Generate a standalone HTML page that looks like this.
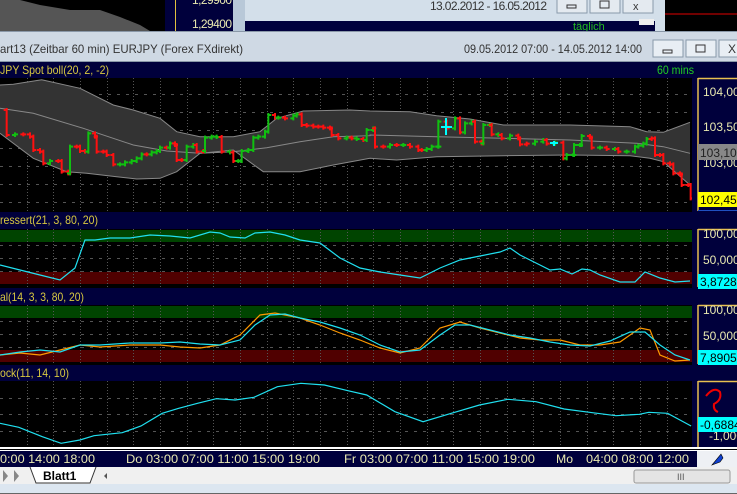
<!DOCTYPE html>
<html><head><meta charset="utf-8"><style>
html,body{margin:0;padding:0;width:737px;height:494px;overflow:hidden;background:#000;font-family:"Liberation Sans",sans-serif}
svg{display:block}
</style></head><body>
<svg id="s" width="737" height="494" xmlns="http://www.w3.org/2000/svg" font-family="Liberation Sans, sans-serif">
<rect x="0" y="0" width="737" height="31" fill="#000"/>
<path d="M0 0 L20 0 L40 5 L70 10 L100 10 L120 17 L140 25 L150 31 L0 31Z" fill="#555"/>
<rect x="165" y="0" width="10" height="31" fill="#00003c"/>
<line x1="175.5" y1="0" x2="175.5" y2="31" stroke="#e0c040"/>
<rect x="176" y="0" width="57" height="31" fill="#00003c"/>
<text x="192" y="28" font-size="12" fill="#e8e8b0" textLength="40">1,29400</text>
<text x="192" y="4" font-size="12" fill="#e8e8b0" textLength="40">1,29900</text>
<rect x="233" y="0" width="12" height="31" fill="#b8c8d8"/>
<rect x="245" y="0" width="420" height="31" fill="#d3dfea"/>
<text x="430" y="10" font-size="12" fill="#333" textLength="117">13.02.2012 - 16.05.2012</text>
<rect x="557" y="-4" width="30" height="17" fill="#e4eaf0" stroke="#8899aa"/>
<rect x="590" y="-4" width="30" height="17" fill="#e4eaf0" stroke="#8899aa"/>
<rect x="623" y="-4" width="30" height="17" fill="#e4eaf0" stroke="#8899aa"/>
<rect x="567" y="5" width="9" height="3" fill="none" stroke="#333"/>
<rect x="600" y="1" width="9" height="7" fill="none" stroke="#333"/>
<text x="633" y="10" font-size="11" fill="#333">x</text>
<rect x="245" y="21" width="410" height="10" fill="#00003c"/>
<text x="573" y="30" font-size="11" fill="#22bb22">täglich</text>
<rect x="639" y="19" width="15" height="6" fill="#eee"/>
<rect x="665" y="0" width="72" height="31" fill="#000"/>
<line x1="665" y1="14" x2="737" y2="14" stroke="#e00000"/>
<rect x="0" y="31" width="737" height="31" fill="#cfd9e4"/>
<line x1="0" y1="31.5" x2="737" y2="31.5" stroke="#8a98a8"/>
<line x1="0" y1="61.5" x2="737" y2="61.5" stroke="#8a98a8"/>
<text x="0" y="53" font-size="12" fill="#333" textLength="243" lengthAdjust="spacingAndGlyphs">art13 (Zeitbar 60 min)  EURJPY (Forex FXdirekt)</text>
<text x="464" y="53" font-size="12" fill="#333" textLength="178" lengthAdjust="spacingAndGlyphs">09.05.2012 07:00 - 14.05.2012 14:00</text>
<rect x="653" y="40" width="30" height="17" fill="#e8eef4" stroke="#8899aa"/>
<rect x="686" y="40" width="30" height="17" fill="#e8eef4" stroke="#8899aa"/>
<rect x="719" y="40" width="30" height="17" fill="#e8eef4" stroke="#8899aa"/>
<rect x="663" y="50" width="9" height="3" fill="none" stroke="#333"/>
<rect x="696" y="45" width="9" height="7" fill="none" stroke="#333"/>
<text x="728" y="53" font-size="12" fill="#333">X</text>
<rect x="0" y="62" width="737" height="16" fill="#00003c"/>
<text x="0" y="74" font-size="12" fill="#d8c840" textLength="109" lengthAdjust="spacingAndGlyphs">JPY Spot boll(20, 2, -2)</text>
<text x="657" y="74" font-size="12" fill="#22cc22" textLength="37" lengthAdjust="spacingAndGlyphs">60 mins</text>
<rect x="0" y="212" width="737" height="17" fill="#00003c"/>
<text x="0" y="224" font-size="12" fill="#d8c840" textLength="98" lengthAdjust="spacingAndGlyphs">ressert(21, 3, 80, 20)</text>
<rect x="0" y="288" width="737" height="17" fill="#00003c"/>
<text x="0" y="301" font-size="12" fill="#d8c840" textLength="84" lengthAdjust="spacingAndGlyphs">al(14, 3, 3, 80, 20)</text>
<rect x="0" y="365" width="737" height="16" fill="#00003c"/>
<text x="0" y="377" font-size="12" fill="#d8c840" textLength="69" lengthAdjust="spacingAndGlyphs">ock(11, 14, 10)</text>
<rect x="0" y="230" width="692" height="12" fill="#004400"/>
<rect x="0" y="272" width="692" height="12" fill="#500000"/>
<rect x="0" y="306" width="692" height="12" fill="#004400"/>
<rect x="0" y="350" width="692" height="12" fill="#500000"/>
<g id="grid"></g>
<g id="plot"></g>
<rect x="692" y="78" width="45" height="370" fill="#00003c"/>
<g stroke="#e8c050" stroke-width="1.5">
<line x1="698" y1="78" x2="698" y2="211"/><line x1="698" y1="229" x2="698" y2="287"/><line x1="698" y1="305" x2="698" y2="364"/><line x1="698" y1="381" x2="698" y2="447"/>
<line x1="698" y1="78.5" x2="737" y2="78.5"/><line x1="698" y1="229.5" x2="737" y2="229.5"/><line x1="698" y1="305.5" x2="737" y2="305.5"/><line x1="698" y1="381.5" x2="737" y2="381.5"/>
</g>
<line x1="698" y1="210.5" x2="737" y2="210.5" stroke="#2050c0"/>
<g font-size="12" fill="#e8e8b0">
<text x="703" y="96">104,000</text><text x="703" y="131">103,500</text><text x="703" y="167">103,000</text>
<text x="703" y="238">100,000</text><text x="703" y="264">50,000</text>
<text x="703" y="314">100,000</text><text x="703" y="340">50,000</text>
<text x="709" y="440">-1,000</text>
</g>
<rect x="698" y="144" width="39" height="16" fill="#888"/><text x="700" y="157" font-size="12" fill="#222">103,103</text>
<rect x="698" y="192" width="39" height="15" fill="#ffff00"/><text x="700" y="204" font-size="12" fill="#000">102,450</text>
<rect x="698" y="274" width="39" height="15" fill="#00ffff"/><text x="700" y="286" font-size="12" fill="#000">3,8728</text>
<rect x="698" y="350" width="39" height="15" fill="#00ffff"/><text x="700" y="362" font-size="12" fill="#000">7,8905</text>
<rect x="698" y="417" width="39" height="15" fill="#00ffff"/><text x="700" y="429" font-size="12" fill="#000">-0,6884</text>
<path d="M706 396 Q714 386 720 392 Q722 400 714 404 Q713 410 718 412" fill="none" stroke="#ee0000" stroke-width="2"/>
<rect x="0" y="447" width="737" height="2" fill="#fff"/>
<rect x="0" y="450" width="737" height="1" fill="#fff"/>
<rect x="0" y="451" width="737" height="16" fill="#00003c"/>
<rect x="697" y="451" width="40" height="16" fill="#eef0f4"/>
<path d="M712 465 L721 454 L723 458 L720 462Z" fill="#1040d0" stroke="#000" stroke-width=".6"/>
<g font-size="12" fill="#e8e8b0">
<text x="0" y="463" textLength="95" lengthAdjust="spacingAndGlyphs">0:00 14:00 18:00</text>
<text x="126" y="463" textLength="194" lengthAdjust="spacingAndGlyphs">Do 03:00 07:00 11:00 15:00 19:00</text>
<text x="344" y="463" textLength="191" lengthAdjust="spacingAndGlyphs">Fr 03:00 07:00 11:00 15:00 19:00</text>
<text x="556" y="463" textLength="17" lengthAdjust="spacingAndGlyphs">Mo</text>
<text x="586" y="463" textLength="103" lengthAdjust="spacingAndGlyphs">04:00 08:00 12:00</text>
</g>
<rect x="0" y="467" width="737" height="17" fill="#f0f0f0"/>
<rect x="0" y="484" width="737" height="10" fill="#dce6f0"/>
<line x1="0" y1="493.5" x2="737" y2="493.5" stroke="#666"/>
<path d="M3 470 L8 476 L3 482Z M14 470 L19 476 L14 482Z" fill="#888"/>
<path d="M30 467 L36 483 L90 483 L96 467" fill="#fff" stroke="#333"/>
<text x="43" y="480" font-size="12" font-weight="bold" fill="#000">Blatt1</text>
<path d="M107 473 L104 476 L107 479Z" fill="#555"/>
<rect x="634" y="470" width="96" height="13" rx="2" fill="#e4e4e4" stroke="#999"/>
<text x="677" y="480" font-size="9" fill="#555">III</text>
</svg>
<script>
var NS="http://www.w3.org/2000/svg";
function el(p,t,a){var e=document.createElementNS(NS,t);for(var k in a)e.setAttribute(k,a[k]);p.appendChild(e);return e;}
var grid=document.getElementById("grid"),plot=document.getElementById("plot");
var vx=[27,53,80,107,133,160,187,213,240,267,293,320,347,373,400,427,453,480,507,533,560,587,613,640,667];
var panels=[[78,211,[94,112,130,148,166,184,202]],[229,287,[245,258,271]],[305,364,[321,334,347]],[381,447,[398,414,431]]];
panels.forEach(function(p){
 vx.forEach(function(x){el(grid,"line",{x1:x+.5,y1:p[0],x2:x+.5,y2:p[1],stroke:"#555","stroke-dasharray":"1,2"});});
 p[2].forEach(function(y){el(grid,"line",{x1:0,y1:y+.5,x2:692,y2:y+.5,stroke:"#555","stroke-dasharray":"3,6"});});
});
function conv(a,ox,oy){var r=[];for(var i=0;i<a.length;i+=2)r.push([a[i]/3+ox,a[i+1]/3+oy]);return r;}
var up=conv([0,30,40,28,125,14,240,40,340,90,400,105,480,130,530,170,600,185,700,185,780,170,830,130,910,108,1050,105,1110,108],0,75)
 .concat(conv([0,108,120,110,200,122,300,132,400,150,600,150,780,155,830,170,880,172,960,142],370,75));
var lo=conv([0,175,100,250,200,290,260,295,350,305,410,312,480,310,530,290,600,235,700,225,790,290,900,290,1000,270,1110,250],0,75)
 .concat(conv([0,250,80,255,200,245,400,242,600,240,780,242,840,250,880,260,960,330],370,75));
var mid=conv([0,100,100,115,250,160,400,210,500,228,600,235,700,230,800,218,900,200,1000,185,1110,182],0,75)
 .concat(conv([0,180,200,185,400,190,600,195,800,205,880,215,960,235],370,75));
function pts(a){return a.map(function(p){return p[0].toFixed(1)+","+p[1].toFixed(1)}).join(" ");}
el(plot,"polygon",{points:pts(up)+" "+pts(lo.slice().reverse()),fill:"#333"});
el(plot,"polyline",{points:pts(up),fill:"none",stroke:"#888"});
el(plot,"polyline",{points:pts(lo),fill:"none",stroke:"#888"});
el(plot,"polyline",{points:pts(mid),fill:"none",stroke:"#888"});
var c=conv([10,105,20,180,45,178,70,178,90,185,100,225,120,230,130,265,150,258,175,258,185,290,205,295,210,215,230,215,240,228,255,230,265,175,285,185,290,230,310,230,320,240,340,268,360,268,375,262,395,258,410,250,425,238,440,238,455,232,470,228,480,218,500,218,510,205,525,210,530,255,545,255,560,215,580,210,590,230,610,228,615,188,635,185,650,186,665,230,690,232,700,258,715,258,725,228,745,225,760,188,775,185,795,170,805,120,825,128,835,128,855,130,880,122,890,118,905,150,920,152,940,155,955,155,970,158,990,160,995,180,1015,190,1040,188,1055,190,1070,192,1090,195,1100,165],0,75)
 .concat(conv([10,160,15,215,40,215,60,210,80,210,100,210,120,215,145,225,155,225,170,222,185,215,205,215,205,140,230,160,255,130,270,172,285,145,305,140,315,200,335,205,340,150,360,150,365,178,385,180,395,190,420,182,445,190,450,208,470,206,495,200,520,195,530,206,555,203,580,250,590,240,610,240,612,210,630,210,635,183,660,188,665,218,690,218,710,222,735,222,745,230,770,230,795,215,805,212,820,206,830,192,845,190,855,240,870,240,880,265,900,268,910,295,930,298,935,330,955,330,962,370],370,75));
for(var i=1;i<c.length;i++){
 var a=c[i-1],b=c[i];var col=b[1]>a[1]?"#ff1010":"#10c010";
 if(Math.abs(b[1]-a[1])<1)col=i%2?"#ff1010":"#10c010";
 var x=b[0];var y1=Math.min(a[1],b[1])-2,y2=Math.max(a[1],b[1])+2;
 el(plot,"path",{d:"M"+x+" "+y1+"V"+y2+"M"+(x-3)+" "+a[1]+"H"+x+"M"+x+" "+b[1]+"H"+(x+3),stroke:col,"stroke-width":2,fill:"none"});
}
el(plot,"path",{d:"M446 118V135M441 127H452",stroke:"#00ffff","stroke-width":2});
el(plot,"path",{d:"M550 143H558M554 141V146",stroke:"#00ffff","stroke-width":2});
function line(a,col){var s="";for(var i=0;i<a.length;i+=2)s+=a[i]+","+a[i+1]+" ";el(plot,"polyline",{points:s,fill:"none",stroke:col,"stroke-width":1.2});}
line([0,265,20,270,40,275,60,280,75,268,85,240,95,240,110,238,130,238,150,235,170,236,190,238,210,232,220,233,230,237,245,238,255,233,270,232,285,235,300,240,320,243,340,258,360,268,380,272,400,275,420,278,440,268,460,260,480,256,500,252,510,248,520,255,540,265,550,270,560,269,572,274,582,269,590,270,600,275,620,282,635,282,645,272,660,278,675,282,690,281],"#20e0f0");
line([0,355,20,353,40,355,60,350,80,345,100,347,130,345,160,345,180,347,200,348,220,345,240,335,260,315,275,313,300,318,320,325,340,333,360,340,380,348,400,353,420,348,440,328,460,322,480,328,500,333,520,338,540,340,560,340,580,345,600,345,620,342,640,328,650,330,660,355,675,361,690,360],"#ff9900");
line([0,355,20,352,40,350,60,352,80,345,100,345,130,343,160,343,180,342,200,344,220,345,240,340,255,325,270,315,285,314,300,318,320,322,340,328,360,335,380,345,400,352,420,350,440,335,455,325,470,325,490,330,510,335,530,338,550,342,570,345,590,346,610,341,630,332,645,332,660,345,675,355,690,360],"#20e0f0");
var s4=[0,160,40,172,90,200,130,220,170,210,200,197,260,188,300,168,345,130,380,115,420,100,460,86,500,90,540,82,590,50,640,40,690,45,740,62,780,75,840,125,900,155,960,130,1020,105,1080,88,1140,95,1200,117,1260,128,1310,137,1360,133,1380,127,1420,130,1470,168];
var s4c=[];for(var i=0;i<s4.length;i+=2){s4c.push((s4[i]/2.127).toFixed(1),(370+s4[i+1]/3).toFixed(1));}
line(s4c,"#20e0f0");
</script>
</body></html>
